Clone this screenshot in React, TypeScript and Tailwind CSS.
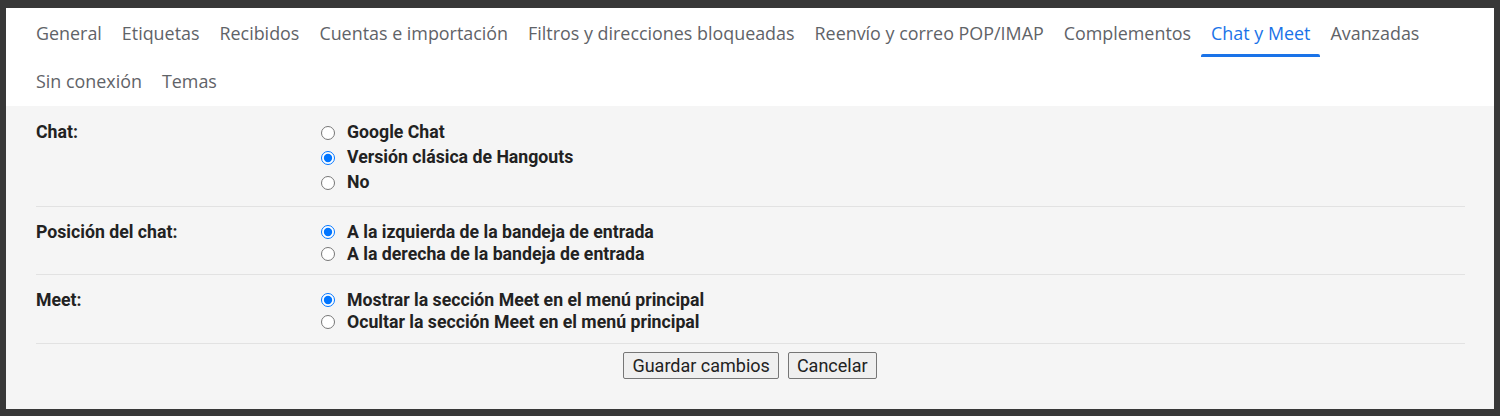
import React from "react";

const tabs = [
  "General",
  "Etiquetas",
  "Recibidos",
  "Cuentas e importación",
  "Filtros y direcciones bloqueadas",
  "Reenvío y correo POP/IMAP",
  "Complementos",
  "Chat y Meet",
  "Avanzadas",
  "Sin conexión",
  "Temas",
];

type Section = {
  label: string;
  rowClass: string;
  options: { text: string; checked: boolean }[];
};

const sections: Section[] = [
  {
    label: "Chat:",
    rowClass: "h-[25px]",
    options: [
      { text: "Google Chat", checked: false },
      { text: "Versión clásica de Hangouts", checked: true },
      { text: "No", checked: false },
    ],
  },
  {
    label: "Posición del chat:",
    rowClass: "h-[22px]",
    options: [
      { text: "A la izquierda de la bandeja de entrada", checked: true },
      { text: "A la derecha de la bandeja de entrada", checked: false },
    ],
  },
  {
    label: "Meet:",
    rowClass: "h-[22px]",
    options: [
      { text: "Mostrar la sección Meet en el menú principal", checked: true },
      { text: "Ocultar la sección Meet en el menú principal", checked: false },
    ],
  },
];

export default function App() {
  return (
    <div className="w-[1500px] h-[416px] bg-[#383838] pt-[8px] pl-[6px] pr-[6px] pb-[7px]">
      <div className="flex flex-col h-full bg-[#f5f5f5]">
        {/* Tabs */}
        <div className="bg-white h-[98px] pt-[1px] px-[20px] flex flex-wrap content-start">
          {tabs.map((t) => {
            const active = t === "Chat y Meet";
            return (
              <div
                key={t}
                className={
                  "relative h-[48px] px-[10px] flex items-center text-[17.9px] font-['Open_Sans',sans-serif] whitespace-nowrap " +
                  (active ? "text-[#1a73e8]" : "text-[#5f6368]")
                }
              >
                {t}
                {active && <div className="absolute left-0 right-0 bottom-0 h-[3px] bg-[#1a73e8] rounded-t-[2px]" />}
              </div>
            );
          })}
        </div>

        {/* Settings */}
        <div className="flex-1 font-['Roboto',sans-serif] text-[17.7px] text-[#222222]">
          {sections.map((s, i) => (
            <div
              key={s.label}
              className={
                "mx-[30px] mr-[29px] flex border-b border-[#e2e2e2] " +
                (i === 0 ? "pt-[14px] pb-[11px]" : i === 1 ? "pt-[14px] pb-[9px]" : "pt-[14px] pb-[10px]")
              }
            >
              <div className={"w-[285px] font-bold flex items-center self-start " + s.rowClass}>{s.label}</div>
              <div className="flex flex-col">
                {s.options.map((o) => (
                  <label key={o.text} className={"flex items-center font-bold " + s.rowClass}>
                    <input
                      type="radio"
                      name={s.label}
                      checked={o.checked}
                      onChange={() => {}}
                      className="m-0 mr-[12px] w-[14px] h-[14px] shrink-0"
                    />
                    {o.text}
                  </label>
                ))}
              </div>
            </div>
          ))}

          <div className="flex justify-center gap-[9px] pt-[8px]">
            <button className="h-[27px] px-[8px] bg-[#efefef] border border-[#767676] rounded-[2px] text-[18px] text-[#222] leading-none">
              Guardar cambios
            </button>
            <button className="h-[27px] px-[8px] bg-[#efefef] border border-[#767676] rounded-[2px] text-[18px] text-[#222] leading-none">
              Cancelar
            </button>
          </div>
        </div>
      </div>
    </div>
  );
}
